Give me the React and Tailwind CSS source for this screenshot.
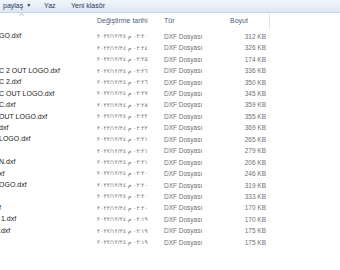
import React from "react";

// dosya listesi (ad sütunu solda kesik)
const rows = [
  { name: "GO.dxf", time: "٠٢:٢٠", size: "312 KB" },
  { name: "", time: "٠٢:٢٤", size: "326 KB" },
  { name: "", time: "٠٢:٢٥", size: "174 KB" },
  { name: "C 2 OUT LOGO.dxf", time: "٠٢:٢٦", size: "336 KB" },
  { name: "C 2.dxf", time: "٠٢:٢٦", size: "350 KB" },
  { name: "C OUT LOGO.dxf", time: "٠٢:٢٧", size: "345 KB" },
  { name: "C.dxf", time: "٠٢:٢٨", size: "359 KB" },
  { name: "OUT LOGO.dxf", time: "٠٢:٢٢", size: "355 KB" },
  { name: "dxf", time: "٠٢:٢٢", size: "369 KB" },
  { name: "LOGO.dxf", time: "٠٢:٢١", size: "265 KB" },
  { name: "", time: "٠٢:٢١", size: "279 KB" },
  { name: "N.dxf", time: "٠٢:٢١", size: "206 KB" },
  { name: "xf", time: "٠٢:٢٠", size: "246 KB" },
  { name: "OGO.dxf", time: "٠٢:٢٠", size: "319 KB" },
  { name: "", time: "٠٢:٢٠", size: "333 KB" },
  { name: "f", time: "٠٢:٢٠", size: "170 KB" },
  { name: " 1.dxf", time: "٠٢:١٩", size: "170 KB" },
  { name: ".dxf", time: "٠٢:١٩", size: "175 KB" },
  { name: "", time: "٠٢:١٩", size: "175 KB" },
];

export default function App() {
  return (
    <div
      className="w-[340px] h-[270px] overflow-hidden bg-white"
      style={{ fontFamily: '"Liberation Sans", "DejaVu Sans", sans-serif' }}
    >
      {/* araç çubuğu */}
      <div className="h-[13px] flex items-center pl-[3px] bg-gradient-to-b from-[#f1f6fc] to-[#dde8f5] border-b border-[#c9d7e8] text-[7px] text-[#1e395b]">
        <div className="w-[41px] flex items-center gap-[3px]">
          <span>paylaş</span>
          <span className="text-[5px] text-[#333]">▼</span>
        </div>
        <span className="w-[27px]">Yaz</span>
        <span>Yeni klasör</span>
      </div>

      {/* sütun başlıkları */}
      <div className="relative h-[17px] flex items-center text-[7px] text-[#4c607a]">
        <svg className="absolute left-[19px] top-0" width="5" height="3" viewBox="0 0 5 3">
          <path d="M0.5 2.5 L2.5 0.5 L4.5 2.5" fill="none" stroke="#9aa6b5" strokeWidth="0.8" />
        </svg>
        <div className="w-[97px]" />
        <div className="w-[67px]">Değiştirme tarihi</div>
        <div className="w-[66px]">Tür</div>
        <div className="w-[40px] h-full flex items-center border-r border-[#e3e8ef]">Boyut</div>
      </div>

      {/* satırlar */}
      <div className="pt-[1px]">
        {rows.map((r, i) => (
          <div key={i} className="h-[11.44px] flex items-center text-[6.5px] text-[#707070]">
            <div className="w-[97px] text-[#222] text-[7px] whitespace-pre overflow-hidden -ml-[1px]">
              {r.name}
            </div>
            <div
              dir="ltr"
              className="w-[67px] ml-[1px] whitespace-pre [unicode-bidi:bidi-override] text-[6px]"
            >
              {"٢٠٢٢/١٢/٢٤ م " + r.time}
            </div>
            <div className="w-[50px]">DXF Dosyası</div>
            <div className="w-[52px] text-right">{r.size}</div>
          </div>
        ))}
      </div>
    </div>
  );
}
